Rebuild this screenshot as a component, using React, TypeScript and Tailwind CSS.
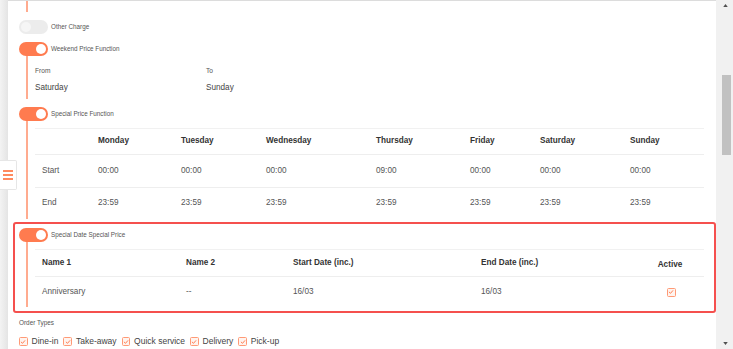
import React from "react";

const days = ["Monday", "Tuesday", "Wednesday", "Thursday", "Friday", "Saturday", "Sunday"];
const starts = ["00:00", "00:00", "00:00", "09:00", "00:00", "00:00", "00:00"];
const ends = ["23:59", "23:59", "23:59", "23:59", "23:59", "23:59", "23:59"];
const orderTypes = ["Dine-in", "Take-away", "Quick service", "Delivery", "Pick-up"];

function Toggle({ on, label }: { on: boolean; label: string }) {
  return (
    <div className="flex items-center gap-[3px]">
      <div
        className={
          on
            ? "flex h-[14px] w-[29px] items-center justify-end rounded-full bg-[#ff7b4f] px-[2px]"
            : "flex h-[14px] w-[29px] items-center justify-start rounded-full bg-[#ececec] px-[2px]"
        }
      >
        <div className={on ? "h-[10px] w-[10px] rounded-full bg-white" : "h-[10px] w-[10px] rounded-full bg-[#f6f6f6]"} />
      </div>
      <span className="text-[6.3px] leading-[8px] text-[#555]">{label}</span>
    </div>
  );
}

function Check({ size = 8.5 }: { size?: number }) {
  return (
    <span
      className="flex items-center justify-center rounded-[1.5px] border border-[#ff9a76] bg-[#fff4ef]"
      style={{ width: size, height: size }}
    >
      <svg viewBox="0 0 10 10" className="h-[6px] w-[6px]">
        <path d="M2 5.2 L4.2 7.2 L8 2.8" fill="none" stroke="#ff7b4f" strokeWidth="1.6" strokeLinecap="round" strokeLinejoin="round" />
      </svg>
    </span>
  );
}

export default function App() {
  return (
    <div className="relative flex h-[349px] w-[733px] overflow-hidden bg-white font-['Liberation_Sans',Arial,sans-serif]">
      {/* left gutter */}
      <div className="w-[8px] shrink-0 bg-linear-to-r from-[#f3f3f3] to-[#e4e4e4]" />

      {/* menu button */}
      <div className="absolute left-0 top-[160px] flex h-[30px] w-[17px] flex-col items-center justify-center gap-[2.5px] rounded-r-[2px] border border-l-0 border-[#e6e6e6] bg-white">
        <span className="h-[1.5px] w-[10px] bg-[#ff8a5f]" />
        <span className="h-[1.5px] w-[10px] bg-[#ff8a5f]" />
        <span className="h-[1.5px] w-[10px] bg-[#ff8a5f]" />
      </div>

      {/* panel */}
      <div className="flex-1 border-t border-[#dcdcdc] pl-[11px]">
        <div className="ml-[7px] h-[11px] border-l-2 border-l-[#ffab8f]" />

        <div className="mt-[8px]">
          <Toggle on={false} label="Other Charge" />
        </div>

        <div className="mt-[8px]">
          <Toggle on label="Weekend Price Function" />
        </div>
        <div className="ml-[7px] border-l-2 border-l-[#ffab8f] pb-[6px] pl-[7px] pt-[10px]">
          <div className="grid grid-cols-[171px_1fr] text-[6.6px] leading-[9px] text-[#555]">
            <span>From</span>
            <span>To</span>
          </div>
          <div className="mt-[7px] grid grid-cols-[171px_1fr] text-[8.2px] leading-[11px] text-[#444]">
            <span>Saturday</span>
            <span>Sunday</span>
          </div>
        </div>

        <div className="mt-[8px]">
          <Toggle on label="Special Price Function" />
        </div>
        <div className="ml-[7px] border-l-2 border-l-[#ffab8f] pl-[7px] pr-[12px] pt-[7px]">
          <div className="border-t border-[#f1f1f1] text-[8.2px]">
            <div className="grid h-[26px] grid-cols-[56px_83px_85px_110px_94px_70px_90px_1fr] items-center border-b border-[#eeeeee] font-bold text-[#333]">
              <span />
              {days.map((d) => (
                <span key={d} className="pl-[7px]">
                  {d}
                </span>
              ))}
            </div>
            <div className="grid h-[33px] grid-cols-[56px_83px_85px_110px_94px_70px_90px_1fr] items-center border-b border-[#eeeeee] text-[#555]">
              <span className="pl-[7px]">Start</span>
              {starts.map((t, i) => (
                <span key={i} className="pl-[7px]">
                  {t}
                </span>
              ))}
            </div>
            <div className="grid h-[31px] grid-cols-[56px_83px_85px_110px_94px_70px_90px_1fr] items-center text-[#555]">
              <span className="pl-[7px]">End</span>
              {ends.map((t, i) => (
                <span key={i} className="pl-[7px]">
                  {t}
                </span>
              ))}
            </div>
          </div>
        </div>

        {/* highlighted block */}
        <div className="-ml-[6px] mt-[3px] rounded-[3px] border-2 border-[#f5504e] pb-[4px] pl-[4px] pr-[10px] pt-[4px]">
          <Toggle on label="Special Date Special Price" />
          <div className="ml-[7px] border-l-2 border-l-[#ffab8f] pl-[7px] pt-[7px]">
            <div className="border-t border-[#f1f1f1] text-[8.2px]">
              <div className="grid h-[27px] grid-cols-[144px_107px_188px_162px_1fr] items-center border-b border-[#eeeeee] font-bold text-[#333]">
                <span className="pl-[7px]">Name 1</span>
                <span className="pl-[7px]">Name 2</span>
                <span className="pl-[7px]">Start Date (inc.)</span>
                <span className="pl-[7px]">End Date (inc.)</span>
                <span className="pt-[4px] text-center">Active</span>
              </div>
              <div className="grid h-[30px] grid-cols-[144px_107px_188px_162px_1fr] items-center text-[#555]">
                <span className="pl-[7px]">Anniversary</span>
                <span className="pl-[7px]">--</span>
                <span className="pl-[7px]">16/03</span>
                <span className="pl-[7px]">16/03</span>
                <span className="flex justify-center pl-[2px]">
                  <Check size={9} />
                </span>
              </div>
            </div>
          </div>
        </div>

        <div className="mt-[6px] text-[6.4px] leading-[8px] text-[#555]">Order Types</div>
        <div className="mt-[10px] flex h-[9px] items-center gap-[5px] text-[8.5px] text-[#444]">
          {orderTypes.map((o) => (
            <label key={o} className="flex items-center gap-[4px]">
              <Check />
              <span>{o}</span>
            </label>
          ))}
        </div>
      </div>

      {/* scrollbar */}
      <div className="relative w-[17px] shrink-0 bg-[#f1f1f1]">
        <svg viewBox="0 0 6 4" className="absolute left-[7px] top-[4px] h-[3px] w-[5px]">
          <path d="M0 4 L3 0 L6 4 Z" fill="#505050" />
        </svg>
        <div className="ml-[6px] mt-[75px] h-[80px] w-[9px] bg-[#c1c1c1]" />
        <svg viewBox="0 0 6 4" className="absolute bottom-[4px] left-[7px] h-[3px] w-[5px]">
          <path d="M0 0 L6 0 L3 4 Z" fill="#505050" />
        </svg>
      </div>
    </div>
  );
}
